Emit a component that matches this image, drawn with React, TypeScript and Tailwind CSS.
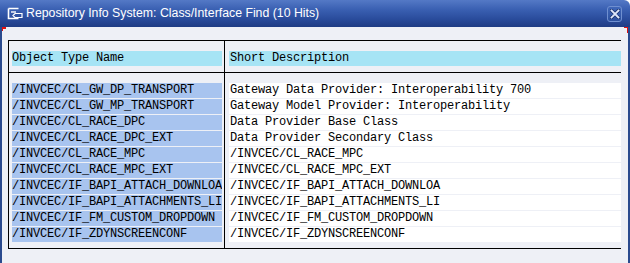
import React from "react";

const rows: [string, string][] = [
  ["/INVCEC/CL_GW_DP_TRANSPORT", "Gateway Data Provider: Interoperability 700"],
  ["/INVCEC/CL_GW_MP_TRANSPORT", "Gateway Model Provider: Interoperability"],
  ["/INVCEC/CL_RACE_DPC", "Data Provider Base Class"],
  ["/INVCEC/CL_RACE_DPC_EXT", "Data Provider Secondary Class"],
  ["/INVCEC/CL_RACE_MPC", "/INVCEC/CL_RACE_MPC"],
  ["/INVCEC/CL_RACE_MPC_EXT", "/INVCEC/CL_RACE_MPC_EXT"],
  ["/INVCEC/IF_BAPI_ATTACH_DOWNLOA", "/INVCEC/IF_BAPI_ATTACH_DOWNLOA"],
  ["/INVCEC/IF_BAPI_ATTACHMENTS_LI", "/INVCEC/IF_BAPI_ATTACHMENTS_LI"],
  ["/INVCEC/IF_FM_CUSTOM_DROPDOWN", "/INVCEC/IF_FM_CUSTOM_DROPDOWN"],
  ["/INVCEC/IF_ZDYNSCREENCONF", "/INVCEC/IF_ZDYNSCREENCONF"],
];

const mono =
  "font-['Liberation_Mono',monospace] text-[12px] tracking-[-0.2px] leading-[15px] text-black whitespace-nowrap overflow-hidden";

function TitleIcon() {
  return (
    <svg width="17" height="13" viewBox="0 0 17 13" className="shrink-0">
      <path d="M1.5 1.5 H11.5 M1.5 1.5 V11.5 H11.5" stroke="#fff" strokeWidth="1.6" fill="none" />
      <path d="M4 5 H9" stroke="#fff" strokeWidth="1.4" />
      <path d="M6 8.5 L8 6.5 L15 6.5 L15 10.5 L8 10.5 Z" stroke="#fff" strokeWidth="1.2" fill="none" />
    </svg>
  );
}

function CloseButton() {
  return (
    <div className="flex h-[16px] w-[15px] items-center justify-center rounded-[3px] border border-[#6f8fd0] bg-[linear-gradient(180deg,#3f66b8,#2c509e)]">
      <svg width="10" height="10" viewBox="0 0 10 10">
        <path d="M1.5 1.5 L8.5 8.5 M8.5 1.5 L1.5 8.5" stroke="#1b336e" strokeWidth="3.4" strokeLinecap="round" />
        <path d="M1.5 1.5 L8.5 8.5 M8.5 1.5 L1.5 8.5" stroke="#dfe8fa" strokeWidth="1.8" strokeLinecap="square" />
      </svg>
    </div>
  );
}

export default function App() {
  return (
    <div className="relative flex h-[263px] w-[630px] flex-col overflow-hidden bg-white">
      <div className="flex h-[27px] shrink-0 items-center rounded-tr-[6px] bg-[linear-gradient(180deg,#5479c6_0%,#3a60b2_35%,#2a4c9c_70%,#1f3c84_100%)] pl-[7px] pr-[8px]">
        <TitleIcon />
        <span className="ml-[2px] font-['Liberation_Sans',sans-serif] text-[12.3px] text-white">
          Repository Info System: Class/Interface Find (10 Hits)
        </span>
        <div className="ml-auto">
          <CloseButton />
        </div>
      </div>

      <div className="flex-1 border-x-2 border-[#2a4a8e] bg-[#eef0f6] pl-[6px] pt-[13px]">
        <div className="w-[613px] border-y border-l border-black">
          <div className="grid grid-cols-[216px_396px] border-b border-black">
            <div className="border-r border-black pb-[6px] pl-[3px] pr-[2px] pt-[10px]">
              <div className={`${mono} h-[15px] bg-[#a6e4f5]`}>Object Type Name</div>
            </div>
            <div className="pb-[6px] pl-[4px] pt-[10px]">
              <div className={`${mono} h-[15px] bg-[#a6e4f5] pl-[1px]`}>Short Description</div>
            </div>
          </div>
          <div className="grid grid-cols-[216px_396px]">
            <div className="flex flex-col gap-[1px] border-r border-black pb-[6px] pl-[3px] pr-[2px] pt-[10px]">
              {rows.map(([name]) => (
                <div key={name} className={`${mono} h-[15px] bg-[#a8c4ef]`}>
                  {name}
                </div>
              ))}
            </div>
            <div className="flex flex-col gap-[1px] pb-[6px] pl-[4px] pt-[10px]">
              {rows.map(([name, desc]) => (
                <div key={name} className={`${mono} h-[15px] bg-white pl-[1px]`}>
                  {desc}
                </div>
              ))}
            </div>
          </div>
        </div>
      </div>

      <div className="absolute left-[2px] top-[27px] h-[2px] w-[4px] bg-[#e01010]" />
      <div className="absolute left-[2px] top-[27px] h-[4px] w-[1px] bg-[#e01010]" />
      <div className="absolute left-[624px] top-[27px] h-[1px] w-[4px] bg-[#e01010]" />
      <div className="absolute left-[627px] top-[27px] h-[6px] w-[1px] bg-[#e01010]" />
    </div>
  );
}
